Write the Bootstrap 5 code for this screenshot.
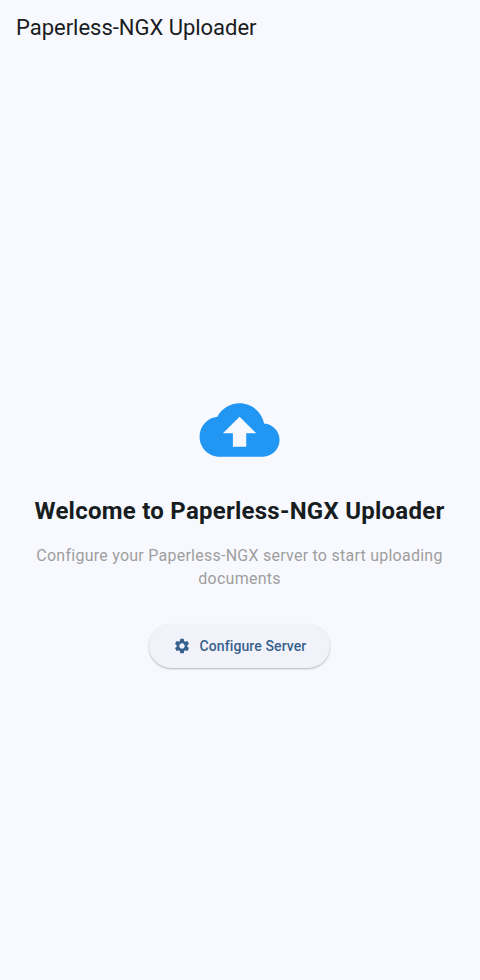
<!DOCTYPE html>
<html lang="en">
<head>
<meta charset="utf-8">
<meta name="viewport" content="width=device-width, initial-scale=1">
<title>Paperless-NGX Uploader</title>
<link href="https://cdn.jsdelivr.net/npm/bootstrap@5.3.0/dist/css/bootstrap.min.css" rel="stylesheet">
<style>
body{font-family:Roboto,sans-serif;background:#f8f9ff;color:#191c20}
.app-title{font-size:22px;line-height:28px;font-weight:400;letter-spacing:-.02px}
.app-bar{height:55px}
.welcome-panel{padding:23px 25px 0 24px}
.cloud{width:80px;height:80px;color:#2196f3;overflow:visible}
.welcome{font-size:24px;line-height:32px;font-weight:700;letter-spacing:.25px;white-space:nowrap;margin-top:25px;color:#171d1e}
.hint{font-size:16px;line-height:23px;letter-spacing:.25px;color:#9e9e9e;margin-top:17px}
.btn-configure{--bs-btn-color:#36618e;--bs-btn-bg:#f2f3fa;--bs-btn-hover-bg:#e8ecf6;--bs-btn-hover-color:#36618e;--bs-btn-border-width:0;height:44px;font-size:14px;font-weight:500;letter-spacing:.1px;margin-top:34px;padding:0 24px;gap:9px;box-shadow:0 1px 2px rgba(0,0,0,.27)}
</style>
</head>
<body class="vh-100 d-flex flex-column overflow-hidden">
<header class="app-bar d-flex align-items-center px-3 flex-shrink-0"><h1 class="app-title m-0">Paperless-NGX Uploader</h1></header>
<main class="welcome-panel flex-grow-1 d-flex flex-column align-items-center justify-content-center text-center">
<svg class="cloud" viewBox="0 0 24 24" fill="currentColor" aria-hidden="true"><path transform="translate(-.13 0)" d="M19.35 10.04C18.67 6.59 15.64 4 12 4 9.11 4 6.6 5.64 5.35 8.04 2.34 8.36 0 10.91 0 14c0 3.31 2.69 6 6 6h13c2.76 0 5-2.24 5-5 0-2.64-2.05-4.78-4.65-4.96zM14 13v4h-4v-4H7l5-5 5 5h-3z"/></svg>
<h2 class="welcome mb-0">Welcome to Paperless-NGX Uploader</h2>
<p class="hint mb-0">Configure your Paperless-NGX server to start uploading documents</p>
<button type="button" class="btn btn-configure rounded-pill d-inline-flex align-items-center">
<svg width="18" height="18" viewBox="0 0 24 24" fill="currentColor" aria-hidden="true"><path d="M19.14 12.94c.04-.3.06-.61.06-.94 0-.32-.02-.64-.07-.94l2.03-1.58c.18-.14.23-.41.12-.61l-1.92-3.32c-.12-.22-.37-.29-.59-.22l-2.39.96c-.5-.38-1.03-.7-1.62-.94l-.36-2.54c-.04-.24-.24-.41-.48-.41h-3.84c-.24 0-.43.17-.47.41l-.36 2.54c-.59.24-1.13.57-1.62.94l-2.39-.96c-.22-.08-.47 0-.59.22L2.74 8.87c-.12.21-.08.47.12.61l2.03 1.58c-.05.3-.09.63-.09.94s.02.64.07.94l-2.03 1.58c-.18.14-.23.41-.12.61l1.92 3.32c.12.22.37.29.59.22l2.39-.96c.5.38 1.03.7 1.62.94l.36 2.54c.05.24.24.41.48.41h3.84c.24 0 .44-.17.47-.41l.36-2.54c.59-.24 1.13-.56 1.62-.94l2.39.96c.22.08.47 0 .59-.22l1.92-3.32c.12-.22.07-.47-.12-.61l-2.01-1.58zM12 15.6c-1.98 0-3.6-1.62-3.6-3.6s1.62-3.6 3.6-3.6 3.6 1.62 3.6 3.6-1.62 3.6-3.6 3.6z"/></svg>
<span>Configure Server</span></button>
</main>
<script src="https://cdn.jsdelivr.net/npm/bootstrap@5.3.0/dist/js/bootstrap.bundle.min.js"></script>
</body>
</html>
